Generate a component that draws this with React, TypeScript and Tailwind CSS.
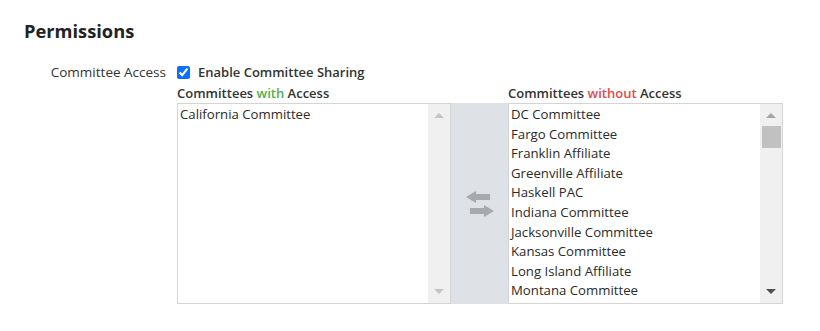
import React from 'react';

const withAccess = ['California Committee'];
const withoutAccess = [
  'DC Committee',
  'Fargo Committee',
  'Franklin Affiliate',
  'Greenville Affiliate',
  'Haskell PAC',
  'Indiana Committee',
  'Jacksonville Committee',
  'Kansas Committee',
  'Long Island Affiliate',
  'Montana Committee',
];

const Track: React.FC<{ thumb?: boolean; dark?: boolean }> = ({ thumb, dark }) => (
  <div className="w-[22px] shrink-0 bg-[#f0f0f0] flex flex-col items-center justify-between py-[9px]">
    <div className="flex flex-col items-center gap-[8px]">
      <div
        className={`w-0 h-0 border-l-[5px] border-r-[5px] border-b-[5px] border-l-transparent border-r-transparent ${
          dark ? 'border-b-[#a3a3a3]' : 'border-b-[#c4c4c4]'
        }`}
      />
      {thumb && <div className="w-[19px] h-[22px] bg-[#c1c1c1]" />}
    </div>
    <div
      className={`w-0 h-0 border-l-[5px] border-r-[5px] border-t-[5px] border-l-transparent border-r-transparent ${
        dark ? 'border-t-[#505050]' : 'border-t-[#c4c4c4]'
      }`}
    />
  </div>
);

const ListBox: React.FC<{ items: string[]; thumb?: boolean; dark?: boolean }> = ({ items, thumb, dark }) => (
  <div className="flex h-[201px] border border-[#d4d4d4] bg-white">
    <ul className="flex-1 pl-[2px] pt-[1px] text-[13.2px] leading-[19.6px] text-[#2b2b2b] overflow-hidden">
      {items.map((it) => (
        <li key={it} className="whitespace-nowrap">{it}</li>
      ))}
    </ul>
    <Track thumb={thumb} dark={dark} />
  </div>
);

// swap arrows, left over right
const SwapIcon = () => (
  <svg width="28" height="26" viewBox="0 0 28 26" fill="#a6a9ad">
    <path d="M0 6 L10 0 L10 3 L24 3 L24 9 L10 9 L10 12 Z" />
    <path d="M28 20 L18 14 L18 17 L4 17 L4 23 L18 23 L18 26 Z" />
  </svg>
);

export default function App() {
  return (
    <div className="w-[820px] h-[331px] bg-white text-[#333] font-['Open_Sans',sans-serif] pl-6 pt-[17px]">
      <h2 className="text-[18.3px] font-bold leading-[28px] text-[#222]">Permissions</h2>
      <div className="flex mt-[17px]">
        <div className="w-[142px] text-right text-[13.5px] leading-[20px] text-[#333]">Committee Access</div>
        <div className="ml-[11px] flex flex-col">
          <label className="flex items-center text-[13px] leading-[20px]">
            <input type="checkbox" defaultChecked className="w-[13px] h-[13px] accent-[#0d6efd] m-0" />
            <span className="ml-[8px] font-semibold">Enable Committee Sharing</span>
          </label>
          <div className="flex mt-[1px]">
            <div className="w-[274px] flex flex-col">
              <div className="text-[13px] leading-[20px] font-semibold">
                Committees <span className="text-[#4caf50]">with</span> Access
              </div>
              <ListBox items={withAccess} />
            </div>
            <div className="w-[57px] mt-[20px] h-[201px] bg-[#dee1e5] flex items-center justify-center">
              <SwapIcon />
            </div>
            <div className="w-[275px] flex flex-col">
              <div className="text-[13px] leading-[20px] font-semibold">
                Committees <span className="text-[#e5484d]">without</span> Access
              </div>
              <ListBox items={withoutAccess} thumb dark />
            </div>
          </div>
        </div>
      </div>
    </div>
  );
}
